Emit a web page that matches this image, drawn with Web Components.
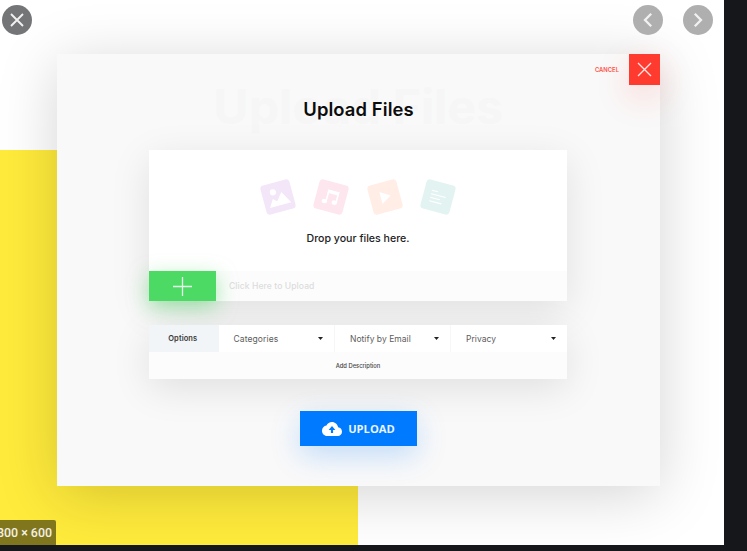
<!DOCTYPE html>
<html lang="en">
<head>
<meta charset="utf-8">
<title>Upload Files</title>
<style>
html,body{margin:0;height:100%;background:#15171b;overflow:hidden}
body{font-family:Inter,"Liberation Sans",sans-serif;color:#111}
</style>
</head>
<body>
<preview-stage>
  <upload-dialog heading="Upload Files">
    <close-button slot="close">CANCEL</close-button>
    <drop-zone>
      <file-tile kind="image" slot="tiles"></file-tile>
      <file-tile kind="music" slot="tiles"></file-tile>
      <file-tile kind="video" slot="tiles"></file-tile>
      <file-tile kind="text" slot="tiles"></file-tile>
      <span>Drop your files here.</span>
      <span slot="hint">Click Here to Upload</span>
    </drop-zone>
    <options-panel>
      <option-select style="--w:116.5px;--ls:.1px">Categories</option-select>
      <option-select style="--w:116px;--ls:.03px">Notify by Email</option-select>
      <option-select style="--w:116px;--ls:.03px">Privacy</option-select>
      <span slot="description">Add Description</span>
    </options-panel>
    <upload-button>UPLOAD</upload-button>
  </upload-dialog>
  <round-button slot="over" kind="close" style="left:2px"></round-button>
  <round-button slot="over" kind="prev" style="left:633px"></round-button>
  <round-button slot="over" kind="next" style="left:683px"></round-button>
  <size-badge slot="over">800 × 600</size-badge>
</preview-stage>
<script>
const define = (name, html) => {
  const t = document.createElement('template');
  customElements.define(name, class extends HTMLElement {
    constructor() {
      super();
      t.innerHTML = typeof html === 'function' ? html(this) : html;
      this.attachShadow({mode: 'open'}).append(t.content.cloneNode(true));
    }
  });
};

define('preview-stage', `<style>
:host{display:block;position:relative;box-sizing:border-box;width:724px;height:545px;padding:54.4px 64px 58px 57px;overflow:hidden;
background:linear-gradient(#ffeb3b,#ffeb3b) 0 150px/358px 395px no-repeat,#fff}
</style><slot></slot><slot name="over"></slot>`);

define('upload-dialog', el => `<style>
:host{display:flex;position:relative;flex-direction:column;align-items:center;width:603px;height:432px;background:#f9f9f9;box-shadow:0 9px 56px rgba(0,0,0,.17)}
header{display:grid;place-items:center;width:100%;height:95.6px;flex:none}
header>*{grid-area:1/1;margin:0;white-space:nowrap}
h1{font-size:18.4px;line-height:24px;font-weight:600;letter-spacing:.1px;padding-top:14px;color:#0c0c0c}
.ghost{font-size:48px;line-height:56px;font-weight:700;letter-spacing:.2px;padding-top:10px;color:#f6f6f6}
</style><header><div class="ghost" aria-hidden="true">${el.getAttribute('heading')}</div><h1>${el.getAttribute('heading')}</h1></header>
<slot></slot><slot name="close"></slot>`);

define('close-button', `<style>
:host{position:absolute;top:0;right:0;display:flex;align-items:center;gap:10px;font-size:5.8px;font-weight:600;letter-spacing:.05px;color:#ff5148}
i{display:grid;place-items:center;width:31px;height:31px;background:#ff3b30;box-shadow:0 12px 34px rgba(255,59,48,.2)}
svg{display:block}
</style><slot></slot><i><svg width="15" height="15" viewBox="0 0 15 15"><path d="M1 1l13 13M14 1L1 14" stroke="#ffe5e3" stroke-width="1.3"/></svg></i>`);

define('drop-zone', `<style>
:host{display:flex;flex-direction:column;flex:none;width:418px;height:151px;margin-right:1px;background:#fff;box-shadow:0 10px 38px rgba(0,0,0,.1)}
.drop{display:flex;flex-direction:column;align-items:center;height:121.5px}
.tiles{display:flex;gap:23.2px;padding-top:32px;height:30px}
.label{font-size:10.6px;line-height:14px;font-weight:500;padding-top:20px;color:#222}
.foot{display:flex;align-items:center;height:29.5px;background:#fcfcfc;font-size:8.6px;font-weight:500;letter-spacing:.06px;color:#dcdcdc}
.add{display:grid;place-items:center;width:66.5px;height:29.5px;margin-right:13.5px;background:#4cd964;box-shadow:0 6px 20px rgba(76,217,100,.5)}
</style><div class="drop"><div class="tiles"><slot name="tiles"></slot></div><div class="label"><slot></slot></div></div>
<div class="foot"><div class="add"><svg width="19" height="19" viewBox="0 0 19 19"><path d="M9.5 0v19M0 9.5h19" stroke="#e6fae9" stroke-width="1.3"/></svg></div><slot name="hint"></slot></div>`);

const tiles = {
  image: ['#f3e6f8', -15, '<circle cx="11.3" cy="9.2" r="3.1" fill="#fff"/><path d="M4.5 23.5l5-8 3.6 3.4L19.5 11l7 12.5z" fill="#fff"/>'],
  music: ['#fde6ee', 15, '<path d="M11.3 20.5V9.3h10v10" fill="none" stroke="#fff" stroke-width="1.6"/><path d="M10.5 8.5h11.6v3.4H10.5z" fill="#fff"/><ellipse cx="9.6" cy="20.6" rx="2.7" ry="2.2" fill="#fff"/><ellipse cx="19.6" cy="19.6" rx="2.7" ry="2.2" fill="#fff"/>'],
  video: ['#ffede6', -15, '<path d="M10.8 8.8l10 6.2-10 6.2z" fill="#fff"/>'],
  text: ['#e3f3f2', 15, '<path d="M7.5 10h6M7.5 13.6h15M7.5 17.2h10M7.5 20.8h12.5" stroke="#fff" stroke-width="1.1"/>']
};
define('file-tile', el => {
  const [color, angle, glyph] = tiles[el.getAttribute('kind')];
  return `<style>:host{display:block;width:30px;height:30px}svg{display:block;overflow:visible;transform:rotate(${angle}deg)}</style>
<svg width="30" height="30" viewBox="0 0 30 30"><rect width="30" height="30" rx="3.5" fill="${color}"/>${glyph}</svg>`;
});

define('options-panel', `<style>
:host{display:block;flex:none;width:418px;height:54px;margin:24.4px 1px 0 0;background:#fcfcfc;box-shadow:0 10px 38px rgba(0,0,0,.1)}
.row{display:flex;height:26.6px;background:#fff}
b{display:grid;place-items:center;box-sizing:border-box;width:69.5px;padding-right:2px;background:#f2f5f7;font-size:7.5px;font-weight:600;letter-spacing:.1px;color:#3a3a3a}
.desc{display:grid;place-items:center;height:27px;font-size:5.8px;font-weight:500;color:#444}
</style><div class="row"><b>Options</b><slot></slot></div><div class="desc"><slot name="description"></slot></div>`);

define('option-select', `<style>
:host{display:flex;align-items:center;justify-content:space-between;box-sizing:border-box;width:var(--w);padding:0 11px 0 15px;border-right:1px solid #f7f7f7;font-size:8.5px;letter-spacing:var(--ls);color:#5c5c5c;white-space:nowrap}
:host(:last-of-type){border:0}
</style><slot></slot><svg width="5" height="3" viewBox="0 0 5 3"><path d="M0 0h5L2.5 3z" fill="#222"/></svg>`);

define('upload-button', `<style>
:host{display:flex;flex:none;align-items:center;justify-content:center;gap:6px;width:117px;height:34.5px;margin-top:32px;background:#007aff;box-shadow:0 9px 30px rgba(0,122,255,.23);color:#e9f4ff;font:700 11.2px "Open Sans",sans-serif}
</style><svg width="20" height="14" viewBox="0 4 24 16" preserveAspectRatio="none"><path fill="#fff" d="M19.35 10.04C18.67 6.59 15.64 4 12 4 9.11 4 6.6 5.64 5.35 8.04 2.34 8.36 0 10.91 0 14c0 3.31 2.69 6 6 6h13c2.76 0 5-2.24 5-5 0-2.64-2.05-4.78-4.65-4.96zM13.3 13v3.6h-2.6V13H8l4-4.4 4 4.4h-2.7z"/></svg><slot></slot>`);

const glyphs = {
  close: ['#747577', 'M9 9l12 12M21 9L9 21', 1.9],
  prev: ['#afafaf', 'M18.2 8.8L12 15l6.2 6.2', 2.3],
  next: ['#afafaf', 'M11.8 8.8L18 15l-6.2 6.2', 2.3]
};
define('round-button', el => {
  const [bg, d, w] = glyphs[el.getAttribute('kind')];
  return `<style>:host{position:absolute;top:5px;width:30px;height:30px}svg{display:block}</style>
<svg width="30" height="30"><circle cx="15" cy="15" r="15" fill="${bg}"/><path d="${d}" fill="none" stroke="#f1f1f1" stroke-width="${w}"/></svg>`;
});

define('size-badge', `<style>
:host{position:absolute;right:668px;bottom:0;height:25px;padding:0 4px;border-radius:0 2px 0 0;background:#80761e;color:#f3f1e4;font:500 12.4px/25px Roboto,sans-serif;white-space:nowrap}
</style><slot></slot>`);
</script>
</body>
</html>
